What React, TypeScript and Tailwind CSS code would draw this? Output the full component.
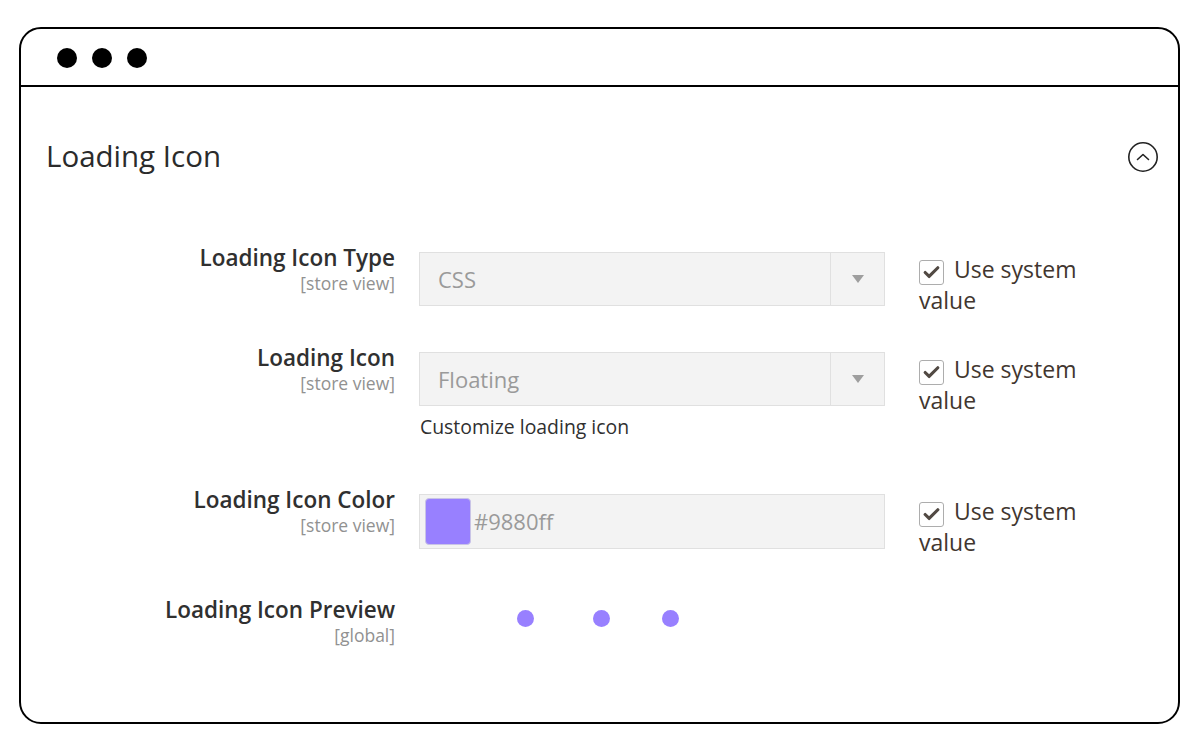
import { Check } from 'lucide-react'

const font = { fontFamily: '"Open Sans", "Noto Sans", sans-serif' }

function Label({ title, scope }: { title: string; scope: string }) {
  return (
    <div className="w-[374px] shrink-0 text-right -mt-[9px]">
      <div className="text-[22.5px] leading-[30px] font-semibold text-[#303030]">{title}</div>
      <div className="text-[17.5px] leading-[20px] text-[#919191]">{scope}</div>
    </div>
  )
}

function UseSystem() {
  return (
    <div className="ml-[34px] w-[190px] pt-[2px] text-[23px] leading-[30px] text-[#41362f]">
      <span className="inline-flex items-center justify-center w-[25px] h-[25px] border border-[#adadad] rounded-[3px] bg-white align-[-4px] mr-[10px]">
        <Check size={19} strokeWidth={4} className="text-[#514943]" />
      </span>
      Use system value
    </div>
  )
}

function Select({ value }: { value: string }) {
  return (
    <div className="w-[466px] h-[54px] flex border border-[#e0e0e0] bg-[#f3f3f3]">
      <div className="flex-1 flex items-center pl-[18px] text-[22px] text-[#9a9a9a]">{value}</div>
      <div className="w-[54px] border-l border-[#e0e0e0] flex items-center justify-center">
        <div className="w-0 h-0 border-l-[6px] border-r-[6px] border-t-[8px] border-l-transparent border-r-transparent border-t-[#9e9e9e]" />
      </div>
    </div>
  )
}

export default function App() {
  return (
    <div className="w-[1200px] h-[750px] bg-white pt-[27px] pl-[19px]" style={font}>
      <div className="w-[1161px] h-[697px] border-2 border-black rounded-[22px] overflow-hidden">
        <div className="h-[58px] border-b-2 border-black flex items-center gap-[15px] pl-[36px] pt-[1px]">
          <span className="w-[20px] h-[20px] rounded-full bg-black" />
          <span className="w-[20px] h-[20px] rounded-full bg-black" />
          <span className="w-[20px] h-[20px] rounded-full bg-black" />
        </div>

        <div className="pt-[51px] pl-[25px] pr-[19px] flex items-center justify-between">
          <h1 className="text-[29.5px] leading-[36px] text-[#2b2b2b] font-medium">Loading Icon</h1>
          <svg width="32" height="32" viewBox="0 0 32 32" className="mt-[1px]">
            <circle cx="16" cy="16" r="14.2" fill="none" stroke="#222" strokeWidth="1.6" />
            <path d="M10.5 18.5 L16 13.5 L21.5 18.5" fill="none" stroke="#222" strokeWidth="1.6" strokeLinecap="round" strokeLinejoin="round" />
          </svg>
        </div>

        <div className="pt-[78px]">
          <div className="flex h-[100px]">
            <Label title="Loading Icon Type" scope="[store view]" />
            <div className="ml-[24px]">
              <Select value="CSS" />
            </div>
            <UseSystem />
          </div>

          <div className="flex h-[142px]">
            <Label title="Loading Icon" scope="[store view]" />
            <div className="ml-[24px]">
              <Select value="Floating" />
              <div className="mt-[9px] text-[19.4px] leading-[24px] text-[#303030] pl-[1px]">Customize loading icon</div>
            </div>
            <UseSystem />
          </div>

          <div className="flex h-[110px]">
            <Label title="Loading Icon Color" scope="[store view]" />
            <div className="ml-[24px]">
              <div className="w-[466px] h-[55px] flex items-center border border-[#e0e0e0] bg-[#f3f3f3] pl-[5px]">
                <div className="w-[46px] h-[47px] rounded-[4px] bg-[#9880ff] border border-[#c9c4e6]" />
                <span className="ml-[3px] text-[22px] text-[#9a9a9a]">#9880ff</span>
              </div>
            </div>
            <UseSystem />
          </div>

          <div className="flex">
            <Label title="Loading Icon Preview" scope="[global]" />
            <div className="ml-[24px] flex items-center h-[32px] -mt-[2px]">
              <span className="ml-[98px] w-[17px] h-[17px] rounded-full bg-[#9880ff]" />
              <span className="ml-[59px] w-[17px] h-[17px] rounded-full bg-[#9880ff]" />
              <span className="ml-[52px] w-[17px] h-[17px] rounded-full bg-[#9880ff]" />
            </div>
          </div>
        </div>
      </div>
    </div>
  )
}
